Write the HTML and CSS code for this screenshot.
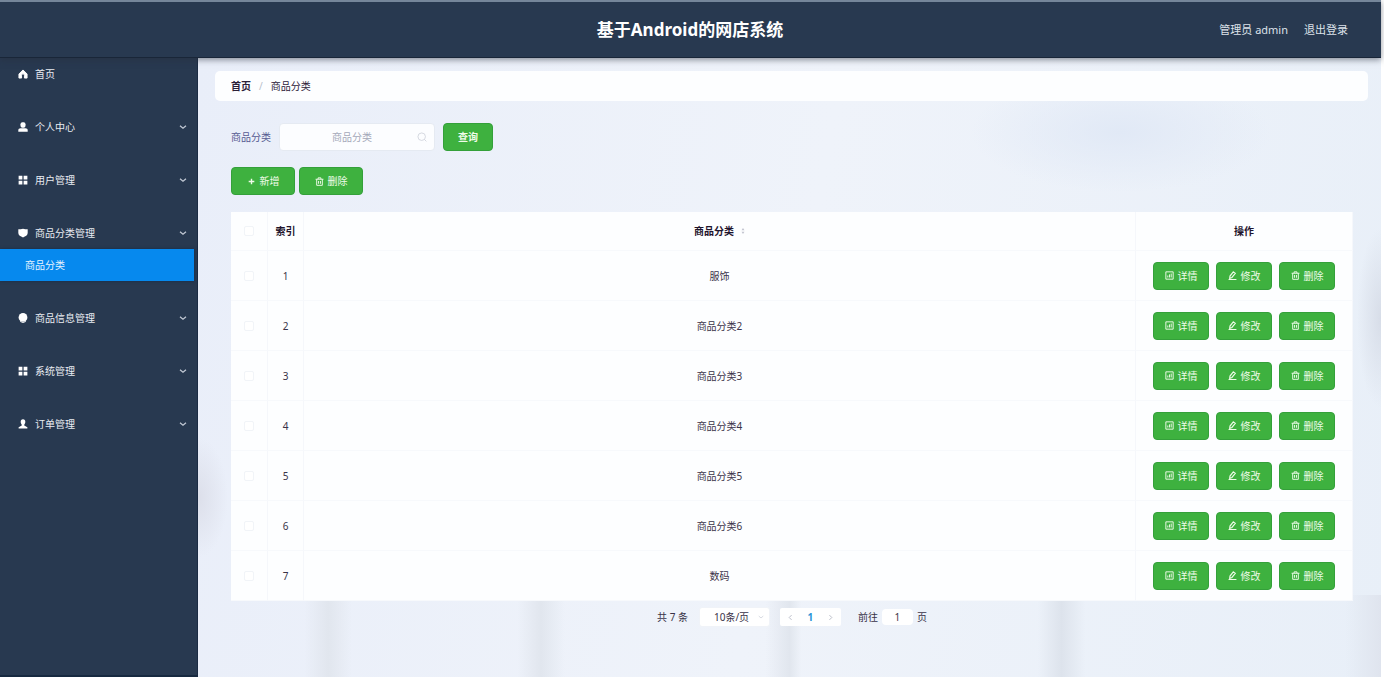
FILE: index.html
```html
<!DOCTYPE html>
<html lang="zh-CN">
<head>
<meta charset="utf-8">
<title>基于Android的网店系统</title>
<link rel="stylesheet" href="styles.css">
</head>
<body>
<svg class="sprite" aria-hidden="true">
  <symbol id="home" viewBox="0 0 16 16"><path d="M8 1.5 1.5 8v6.5h4.2V10a2.3 2.3 0 0 1 4.6 0v4.500h4.200V8z" fill="currentColor" stroke="currentColor" stroke-width="1.500" stroke-linejoin="round"/></symbol>
  <symbol id="user" viewBox="0 0 16 16"><rect x="4" y="0.500" width="8" height="8.500" rx="3" fill="currentColor"/><path d="M.5 15.500V12.500Q.5 10 4 10h8q3.500 0 3.500 2.500v3z" fill="currentColor"/></symbol>
  <symbol id="person" viewBox="0 0 16 16"><path d="M8 .5c2.500 0 3.700 1.700 3.700 4 0 2-.9 3.700-1.700 4.500v1.500l5 2.500v2H1v-2l5-2.500V9C5.200 8.200 4.300 6.500 4.300 4.500c0-2.300 1.200-4 3.700-4z" fill="currentColor"/></symbol>
  <symbol id="grid" viewBox="0 0 16 16"><path d="M1 1h6v6H1zM9 1h6v6H9zM1 9h6v6H1zM9 9h6v6H9z" fill="currentColor"/></symbol>
  <symbol id="shield" viewBox="0 0 16 16"><path d="M.5 2Q4.500 2 8 1q3.500 1 7.500 1V8c0 3.500-3.500 5.500-7.500 7C4 13.500.5 11.500.5 8z" fill="currentColor"/></symbol>
  <symbol id="badge" viewBox="0 0 16 16"><circle cx="8" cy="7" r="7" fill="currentColor"/><path d="M3.500 13.500Q8 17 12.500 13.500" fill="none" stroke="currentColor" stroke-width="1.500"/></symbol>
  <symbol id="down" viewBox="0 0 16 16"><path d="M2 5.500l6 5 6-5" fill="none" stroke="currentColor" stroke-width="2.500"/></symbol>
  <symbol id="left" viewBox="0 0 16 16"><path d="M10.500 2.500 5 8l5.500 5.500" fill="none" stroke="currentColor" stroke-width="1.800"/></symbol>
  <symbol id="right" viewBox="0 0 16 16"><path d="M5.500 2.500 11 8l-5.500 5.500" fill="none" stroke="currentColor" stroke-width="1.800"/></symbol>
  <symbol id="search" viewBox="0 0 16 16"><circle cx="7.500" cy="7.500" r="6" fill="none" stroke="currentColor" stroke-width="1.300"/><path d="M12 12l3 3" stroke="currentColor" stroke-width="1.300"/></symbol>
  <symbol id="plus" viewBox="0 0 16 16"><path d="M8 3v10M3 8h10" stroke="currentColor" stroke-width="2.500"/></symbol>
  <symbol id="trash" viewBox="0 0 16 16"><path d="M1 4h14M5.500 4V1.500h5V4M3 4v10.800h10V4M6.300 7v5M9.700 7v5" fill="none" stroke="currentColor" stroke-width="1.700"/></symbol>
  <symbol id="detail" viewBox="0 0 16 16"><path d="M1.500 1.500h13v13h-13zM5 11.500V8M8 11.500V6M11 11.500V4.500" fill="none" stroke="currentColor" stroke-width="1.700"/></symbol>
  <symbol id="edit" viewBox="0 0 16 16"><path d="M9.500 1.500l3.500 2.500-6 7.500-4 1.500.5-4zM1 15h14" fill="none" stroke="currentColor" stroke-width="2"/></symbol>
  <symbol id="sort" viewBox="0 0 8 16"><path d="M4 2l3 4.500H1zM4 14l3-4.500H1z" fill="currentColor"/></symbol>
</svg>
<header class="topbar">
  <h1 class="title">基于Android的网店系统</h1>
  <div class="account"><span>管理员 admin</span><a class="logout" href="#">退出登录</a></div>
</header>
<div class="shell">
  <nav class="sidebar">
    <a class="item" href="#"><svg class="icon"><use href="#home"/></svg><span>首页</span></a>
    <a class="item" href="#"><svg class="icon"><use href="#user"/></svg><span>个人中心</span><svg class="arrow"><use href="#down"/></svg></a>
    <a class="item" href="#"><svg class="icon"><use href="#grid"/></svg><span>用户管理</span><svg class="arrow"><use href="#down"/></svg></a>
    <div class="group">
      <a class="item" href="#"><svg class="icon"><use href="#shield"/></svg><span>商品分类管理</span><svg class="arrow"><use href="#down"/></svg></a>
      <a class="subitem" href="#">商品分类</a>
    </div>
    <a class="item" href="#"><svg class="icon"><use href="#badge"/></svg><span>商品信息管理</span><svg class="arrow"><use href="#down"/></svg></a>
    <a class="item" href="#"><svg class="icon"><use href="#grid"/></svg><span>系统管理</span><svg class="arrow"><use href="#down"/></svg></a>
    <a class="item" href="#"><svg class="icon"><use href="#person"/></svg><span>订单管理</span><svg class="arrow"><use href="#down"/></svg></a>
  </nav>
  <main class="main">
    <div class="crumbs"><a class="crumb-home" href="#">首页</a><span class="slash">/</span><span>商品分类</span></div>
    <div class="content">
      <form class="search">
        <label for="category">商品分类</label>
        <div class="field"><input id="category" type="text" placeholder="商品分类"><svg class="glass"><use href="#search"/></svg></div>
        <button class="btn query" type="button">查询</button>
      </form>
      <div class="tools">
        <button class="btn tool" type="button"><svg class="bicon"><use href="#plus"/></svg>新增</button>
        <button class="btn tool" type="button"><svg class="bicon"><use href="#trash"/></svg>删除</button>
      </div>
      <table class="table">
        <thead><tr><th class="check"><input type="checkbox" aria-label="全选"></th><th class="index">索引</th><th>商品分类<svg class="sort"><use href="#sort"/></svg></th><th class="ops">操作</th></tr></thead>
        <tbody id="rows"></tbody>
      </table>
      <div class="pager">
        <span>共 7 条</span>
        <div class="size"><select aria-label="每页条数"><option>10条/页</option></select><svg class="caret"><use href="#down"/></svg></div>
        <div class="pages"><button type="button" aria-label="上一页"><svg><use href="#left"/></svg></button><button class="current" type="button">1</button><button type="button" aria-label="下一页"><svg><use href="#right"/></svg></button></div>
        <div class="jump"><label for="goto">前往</label><input id="goto" type="text" value="1"><span>页</span></div>
      </div>
    </div>
  </main>
</div>
<script src="app.js"></script>
</body>
</html>
```
FILE: app.js
```js
const names = ["服饰", "商品分类2", "商品分类3", "商品分类4", "商品分类5", "商品分类6", "数码"];
const actions = [["detail", "详情"], ["edit", "修改"], ["trash", "删除"]];
const buttons = actions.map(([icon, text]) =>
  `<button class="btn" type="button"><svg class="bicon"><use href="#${icon}"/></svg>${text}</button>`).join("");
document.getElementById("rows").innerHTML = names.map((name, i) =>
  `<tr><td><input type="checkbox" aria-label="选择 ${name}"></td><td>${i + 1}</td><td>${name}</td><td><div class="actions">${buttons}</div></td></tr>`).join("");
```
FILE: styles.css
```css
* { box-sizing: border-box; }
html { background: #fff; }
body {
  margin: 0;
  padding: 0 3px 3px 0;
  min-height: 100vh;
  display: flex;
  flex-direction: column;
  font: 10px/16px "Noto Sans", "Noto Sans CJK SC", sans-serif;
  color: #3a3348;
}
a { color: inherit; text-decoration: none; }
button, input, select { font: inherit; color: inherit; }
.sprite { display: none; }
.topbar {
  position: relative;
  z-index: 1;
  display: grid;
  grid-template-columns: 1fr auto 1fr;
  align-items: center;
  height: 58px;
  padding: 0 33px 0 32px;
  border-top: 2px solid #75869a;
  border-bottom: 1px solid #192638;
  background: #283950;
  color: #fff;
  box-shadow: 0 2px 6px rgba(40, 45, 60, 0.5);
}
.title { grid-column: 2; margin: 0; font-size: 17px; line-height: 24px; font-weight: 700; }
.account { justify-self: end; display: flex; gap: 16px; font-size: 11px; color: #dde2ea; }
.shell { flex: 1; display: flex; }
.sidebar {
  flex: none;
  width: 198px;
  display: flex;
  flex-direction: column;
  gap: 21px;
  background: #283950;
  border-right: 1px solid #1b2b43;
  border-bottom: 2px solid #172940;
  color: #e8ecf2;
}
.item { display: flex; align-items: center; gap: 7px; height: 32px; padding: 0 10px 0 18px; }
.icon { width: 10px; height: 10px; color: #fff; }
.arrow { width: 8px; height: 8px; margin-left: auto; color: #c3cad5; }
.subitem {
  display: flex;
  align-items: center;
  height: 32px;
  margin-right: 3px;
  padding-left: 25px;
  background: #0689ee;
  color: #e6f4ff;
  box-shadow: 0 0 3px #172c48;
}
.main {
  flex: 1;
  min-width: 0;
  padding: 13px 13px 0 17px;
  background:
    linear-gradient(90deg, transparent 9%, #e1e6ee 11%, transparent 13%, transparent 27%, #e1e6ee 29%, transparent 31%, transparent 48%, #e1e6ee 50%, transparent 51%, transparent 71%, #dde3ec 73%, transparent 75%, transparent 97%, #dfe4ee) 0 100% / 100% 82px no-repeat,
    radial-gradient(ellipse 24px 90px at 100% 42%, #d7dde8, transparent),
    radial-gradient(ellipse 30px 60px at 0 71%, #dcdfea, transparent),
    radial-gradient(ellipse 150px 60px at 78% 12%, #e1e9f6, transparent),
    linear-gradient(100deg, #e9eef9, #eff3fa 50%, #e8eff8);
}
.crumbs {
  display: flex;
  align-items: center;
  gap: 8px;
  height: 30px;
  padding: 0 16px;
  border-radius: 5px;
  background: #fdfeff;
  color: #2b2038;
}
.crumb-home { font-weight: 700; }
.slash { color: #b7becb; }
.content { padding: 22px 15px 0 16px; }
.search, .tools { display: flex; align-items: center; margin-bottom: 16px; }
.search label { margin-right: 8px; color: #555a91; }
.field { position: relative; width: 156px; height: 28px; margin-right: 8px; }
.field input {
  width: 100%;
  height: 100%;
  padding: 0 22px 0 12px;
  border: 1px solid #e5eaf2;
  border-radius: 4px;
  background: #fcfdff;
  text-align: center;
}
.field input::placeholder { color: #a4a8b9; }
.glass { position: absolute; right: 8px; top: 9px; width: 10px; height: 10px; color: #ccd0da; }
.btn {
  display: flex;
  align-items: center;
  justify-content: center;
  gap: 4px;
  width: 56px;
  height: 28px;
  padding: 0;
  border: 1px solid #34a03a;
  border-radius: 4px;
  background: #3eb13f;
  color: #effbe9;
}
.query { width: 50px; font-weight: 700; }
.bicon { width: 9px; height: 9px; }
.search + .tools { gap: 4px; margin-bottom: 17px; }
.tool { width: 64px; }
.table {
  width: 100%;
  table-layout: fixed;
  border-collapse: separate;
  border-spacing: 0;
  background: #fdfeff;
  text-align: center;
}
.table th, .table td {
  height: 50px;
  padding: 0;
  border-right: 1px solid #f5f7fb;
  border-bottom: 1px solid #f7f9fc;
}
.table th { height: 39px; color: #1f142d; }
.table .check { width: 37px; }
.table .index { width: 36px; }
.table .ops { width: 217px; }
.table input {
  appearance: none;
  display: block;
  width: 10px;
  height: 10px;
  margin: 0 auto;
  border: 1px solid #f1f4f8;
  border-radius: 2px;
  background: #fff;
}
.sort { width: 4px; height: 8px; margin-left: 7px; color: #c2c4cf; }
.actions { display: flex; justify-content: center; gap: 7px; }
.pager { display: flex; align-items: center; justify-content: center; height: 32px; }
.size { position: relative; margin: 0 10px 0 11px; }
.size select {
  appearance: none;
  display: block;
  width: 71px;
  height: 20px;
  padding: 0 12px 0 14px;
  border: 1px solid #f0f3f8;
  border-radius: 3px;
  background: #fff;
}
.caret { position: absolute; right: 6px; top: 7px; width: 6px; height: 6px; color: #d5d9e1; }
.pages { display: flex; width: 61px; height: 18px; margin-right: 17px; border-radius: 2px; background: #fff; }
.pages button { flex: 1; display: flex; align-items: center; justify-content: center; padding: 0; border: 0; background: none; color: #a9aebb; }
.pages svg { width: 7px; height: 7px; }
.pages .current { color: #2a94d8; font-weight: 700; }
.jump { display: flex; align-items: center; gap: 4px; }
.jump input { width: 31px; height: 16px; padding: 0; border: 0; border-radius: 4px; background: #fff; text-align: center; }
```
